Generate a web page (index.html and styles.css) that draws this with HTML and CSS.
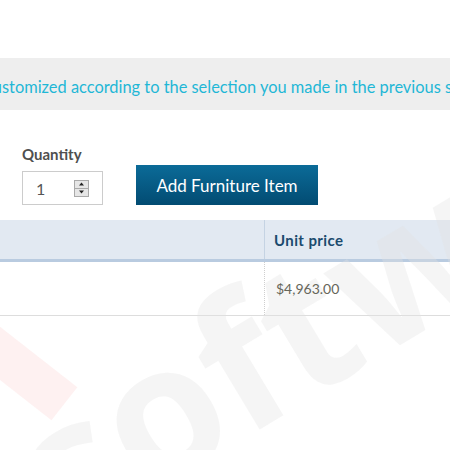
FILE: index.html
```html
<!DOCTYPE html>
<html>
<head>
<meta charset="utf-8">
<link rel="stylesheet" href="styles.css">
</head>
<body>
<div class="page">
  <div class="notice"><p class="notice-text">customized according to the selection you made in the previous step.</p></div>
  <div class="add-row">
    <div class="qty">
      <label class="qty-label">Quantity</label>
      <div class="qty-input">
        <span class="qty-value">1</span>
        <span class="spinner">
          <span class="spin-btn"><svg width="9" height="6" viewBox="0 0 9 6"><path d="M4.5 1.5 L7 4.5 L2 4.5 Z" fill="#222"/></svg></span>
          <span class="spin-btn"><svg width="9" height="6" viewBox="0 0 9 6"><path d="M2 1.5 L7 1.5 L4.5 4.5 Z" fill="#222"/></svg></span>
        </span>
      </div>
    </div>
    <button class="add-btn">Add Furniture Item</button>
  </div>
  <div class="table">
    <div class="thead">
      <div class="th th-main"></div>
      <div class="th th-price"><span class="cell-text">Unit price</span></div>
    </div>
    <div class="trow">
      <div class="td td-main"></div>
      <div class="td td-price"><span class="cell-text">$4,963.00</span></div>
    </div>
  </div>
</div>
<div class="watermark">
  <div class="wm-red"></div>
  <div class="wm-text">softw</div>
</div>
</body>
</html>
```
FILE: styles.css
```css
html, body {
  margin: 0;
  padding: 0;
  width: 450px;
  height: 450px;
  overflow: hidden;
  background: #fff;
  font-family: Lato, "Open Sans", sans-serif;
}
.page {
  padding-top: 58px;
}
.notice {
  background: #eeeeee;
  height: 52px;
  overflow: hidden;
}
.notice-text {
  margin: 0 0 0 -15px;
  white-space: nowrap;
  line-height: 57px;
  font-size: 16.4px;
  color: #1fb7d6;
}
.add-row {
  display: flex;
  align-items: flex-end;
  padding-left: 22px;
  gap: 33px;
  margin-top: 34px;
}
.qty {
  display: flex;
  flex-direction: column;
}
.qty-label {
  font-weight: 700;
  font-size: 15px;
  color: #4f4f4f;
  line-height: 20px;
  margin-bottom: 7px;
}
.qty-input {
  box-sizing: border-box;
  width: 81px;
  height: 34px;
  border: 1px solid #cccccc;
  display: flex;
  align-items: center;
  padding-left: 13px;
}
.qty-value {
  font-size: 16px;
  color: #555;
  flex: 1;
}
.spinner {
  display: flex;
  flex-direction: column;
  margin-right: 13px;
  border: 1px solid #a9a9a9;
  background: #e6e6e6;
}
.spin-btn {
  display: flex;
  width: 13px;
  height: 7px;
  align-items: center;
  justify-content: center;
}
.spin-btn + .spin-btn {
  border-top: 1px solid #a9a9a9;
}
.add-btn {
  width: 182px;
  height: 40px;
  border: none;
  padding: 0;
  background: linear-gradient(#0b6b98, #024b72);
  color: #fff;
  font-family: Lato, "Open Sans", sans-serif;
  font-size: 17px;
}
.table {
  margin-top: 15px;
}
.thead {
  display: flex;
  height: 39px;
  background: #e2e9f2;
  border-bottom: 3px solid #b9cbe0;
}
.th-main {
  width: 264px;
  border-right: 1px solid #c5d3e3;
}
.th-price {
  flex: 1;
  padding-left: 9px;
  line-height: 41px;
  font-weight: 700;
  font-size: 15px;
  letter-spacing: 0.4px;
  color: #1b4b6e;
}
.trow {
  display: flex;
  height: 53px;
  border-bottom: 1px solid #dddddd;
}
.td-main {
  width: 264px;
  border-right: 1px dotted #cfcfcf;
}
.td-price {
  flex: 1;
  padding-left: 11px;
  line-height: 54px;
  font-size: 14px;
  color: #66665a;
}
.cell-text {
  position: relative;
  z-index: 5;
}
.watermark {
  position: absolute;
  left: 0;
  top: 0;
  width: 450px;
  height: 450px;
  pointer-events: none;
  overflow: hidden;
  z-index: 1;
}
.wm-red {
  position: absolute;
  left: -25px;
  top: 352px;
  width: 100px;
  height: 42px;
  background: rgba(240, 80, 80, 0.08);
  transform: rotate(38deg);
}
.wm-text {
  position: absolute;
  left: -18px;
  top: 405px;
  font-family: "Open Sans", sans-serif;
  font-weight: 700;
  font-size: 185px;
  line-height: 1;
  color: rgba(225, 225, 225, 0.35);
  transform-origin: 0 0;
  transform: rotate(-31deg);
  white-space: nowrap;
}
```
